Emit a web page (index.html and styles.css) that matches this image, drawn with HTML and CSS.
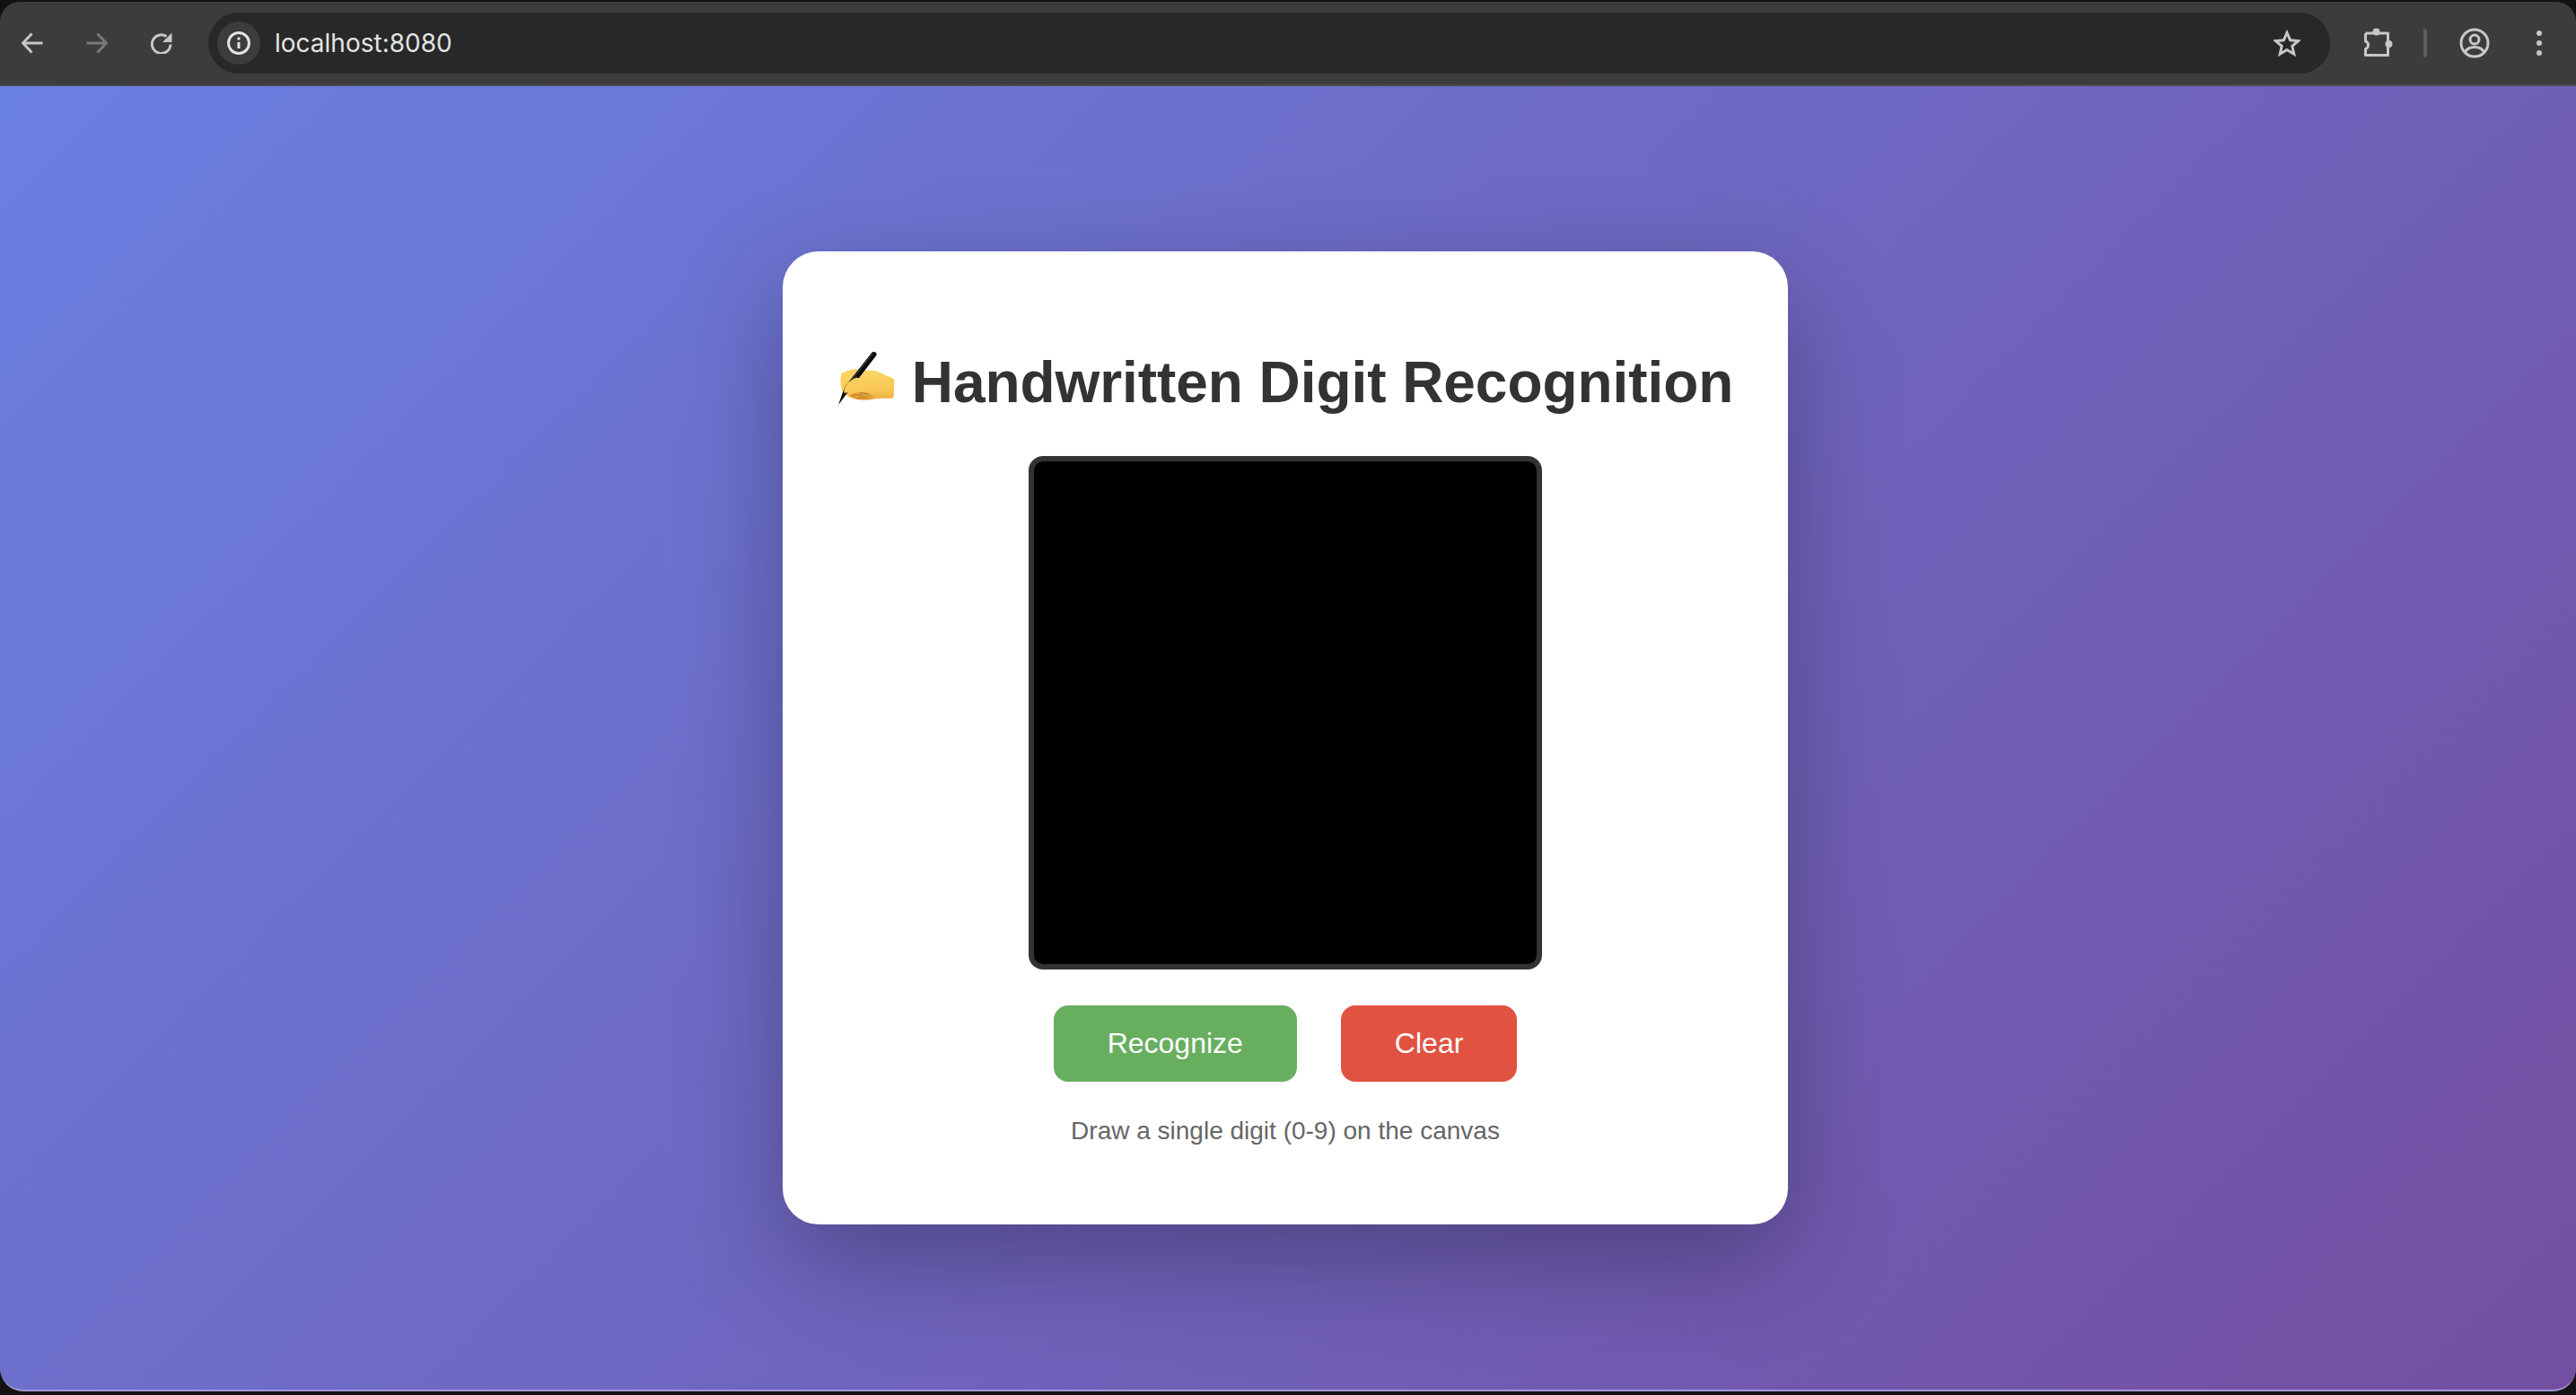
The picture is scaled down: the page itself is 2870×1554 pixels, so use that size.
FILE: index.html
```html
<!DOCTYPE html>
<html lang="en">
<head>
    <meta charset="UTF-8">
    <meta name="viewport" content="width=device-width, initial-scale=1.0">
    <title>Handwritten Digit Recognition</title>
    <link rel="stylesheet" href="styles.css">
</head>
<body>
    <div class="window">
        <div class="toolbar">
            <svg class="nav-icon" width="24" height="24" viewBox="0 0 24 24"><path d="M23.500 12H2M11.500 1.500L1.500 12l10 10.500"/></svg>
            <svg class="nav-icon nav-disabled" width="24" height="24" viewBox="0 0 24 24"><path d="M.5 12h21.500M12.500 1.500l10 10.500-10 10.500"/></svg>
            <svg class="nav-icon" width="24" height="24" viewBox="0 0 24 24"><path d="M22 13.500A10.300 10.300 0 1 1 17.500 4.600"/><path class="fill" d="M23.500 .5v10.500H13z"/></svg>

            <div class="address-bar">
                <span class="site-info">
                    <svg class="nav-icon" width="26" height="26" viewBox="0 0 26 26"><circle cx="13" cy="13" r="11.500"/><path d="M13 12v7"/><path class="fill thin" d="M11.500 6.500h3v3h-3z"/></svg>
                </span>
                <span class="url">localhost:8080</span>
                <svg class="nav-icon star" width="30" height="30" viewBox="0 0 30 30"><path d="M15 3.500l3.700 8.300 8.800.8-6.700 5.800 2 8.800L15 22.500l-7.800 4.700 2-8.800-6.700-5.800 8.800-.8z"/></svg>
            </div>

            <svg class="nav-icon puzzle" width="34" height="34" viewBox="0 0 34 34"><path d="M3.500 6h25v9.500M28.500 20.500v10h-25v-7a4.500 4.500 0 0 0 3-4 4.500 4.500 0 0 0-3-4.500V6" stroke-linejoin="round"/><circle class="fill" cx="15.500" cy="4.500" r="4"/><circle class="fill" cx="29.500" cy="18" r="4"/></svg>
            <span class="divider"></span>
            <svg class="nav-icon avatar" width="34" height="34" viewBox="0 0 34 34"><circle cx="17" cy="17" r="15"/><circle cx="17" cy="13" r="5"/><path d="M6.500 27c2-4 6-5.500 10.500-5.500s8.500 1.500 10.500 5.500"/></svg>
            <span class="menu-dots"><i></i><i></i><i></i></span>
        </div>

        <main class="page">
            <div class="card">
                <h1 class="heading">
                    <svg class="emoji" width="65" height="62" viewBox="25 25 195 186">
                        <defs>
                            <linearGradient id="hand" x1="0.400" y1="0" x2="0.500" y2="1">
                                <stop offset="0" stop-color="#fbd667"/>
                                <stop offset="0.700" stop-color="#f9c753"/>
                                <stop offset="1" stop-color="#eeb040"/>
                            </linearGradient>
                        </defs>
                        <path fill="url(#hand)" d="M38 100C60 88 85 82 110 88c20 4 40 0 55 8l40 18q10 2 10 11l-2 53q-1 6-9 5c-24 0-44-1-59 3-20 4-45 4-65-2-15-2-30-12-38-26-8-18-8-40-4-58z"/>
                        <path fill="#e0a03c" d="M66 172c14-8 38-12 66-4 6 2 12 6 18 11-6 2-12 4-18 7-18 3-38 2-50-2-6-3-12-7-16-12z"/>
                        <path fill="none" stroke="#b8742a" stroke-width="3" d="M72 176c12-6 24-6 36-2M90 184c10-5 22-5 32-2M100 164c10 0 22 2 32 6"/>
                        <path fill="#0b0b0b" d="M140 30q8-6 15 2 3 6-3 12L70 150l-12 15-30 40 14-40 10-23z"/>
                        <path fill="none" stroke="#6c6c6c" stroke-width="2" d="M143 33L56 143"/>
                        <path fill="#f9cd5c" d="M47 160c2-20 18-36 38-45 15-5 23 10 15 20-10 15-30 30-53 30z"/>
                    </svg>
                    <span class="heading-text">Handwritten Digit Recognition</span>
                </h1>
                <canvas class="digit-canvas" width="280" height="280"></canvas>
                <div class="actions">
                    <button class="btn btn-recognize">Recognize</button>
                    <button class="btn btn-clear">Clear</button>
                </div>
                <p class="hint">Draw a single digit (0-9) on the canvas</p>
            </div>
        </main>
    </div>
</body>
</html>
```

FILE: styles.css
```css
*{
    box-sizing: border-box;
}
html, body{
    height: 100%;
}
body{
    margin: 0;
    background-color: #141210;
    font-family: "Liberation Sans", Arial, sans-serif;
    overflow: hidden;
}

.window{
    height: 100%;
    display: flex;
    flex-direction: column;
    padding-bottom: 4px;
    background-color: #141210;
}

/* browser bar */
.toolbar{
    height: 94px;
    flex-shrink: 0;
    display: flex;
    align-items: center;
    margin-top: 2px;
    padding-left: 24px;
    background-color: #3c3c3c;
    border-top-left-radius: 22px;
    border-top-right-radius: 22px;
    border-bottom: 2px solid #4a4a4a;
}
.nav-icon{
    flex-shrink: 0;
    fill: none;
    stroke: #c7c7c7;
    stroke-width: 3;
    margin-right: 48px;
}
.nav-icon .fill{
    fill: #c7c7c7;
    stroke: none;
}
.nav-disabled{
    stroke: #7a7a7a;
}
.address-bar{
    width: 2364px;
    height: 68px;
    flex-shrink: 0;
    display: flex;
    align-items: center;
    margin-left: -8px;
    padding-left: 10px;
    border-radius: 34px;
    background-color: #282828;
}
.site-info{
    width: 48px;
    height: 48px;
    display: flex;
    align-items: center;
    justify-content: center;
    border-radius: 50%;
    background-color: #3c3c3c;
}
.site-info .nav-icon{
    margin: 0;
    stroke: #e3e3e3;
}
.site-info .nav-icon .fill{
    fill: #e3e3e3;
}
.url{
    flex: 1;
    margin-left: 16px;
    font-family: Inter, sans-serif;
    font-size: 28px;
    color: #e3e3e3;
}
.star{
    margin-right: 33px;
}
.puzzle{
    margin: 0 0 0 36px;
}
.divider{
    width: 4px;
    height: 32px;
    margin: 0 36px 0 34px;
    background-color: #5f5f5f;
    border-radius: 2px;
}
.avatar{
    margin-right: 0;
}
.menu-dots{
    display: flex;
    flex-direction: column;
    gap: 5px;
    margin-left: 52px;
}
.menu-dots i{
    width: 6px;
    height: 6px;
    border-radius: 50%;
    background-color: #c7c7c7;
}

/* page */
.page{
    flex: 1;
    display: flex;
    align-items: center;
    justify-content: center;
    padding-right: 6px;
    background: linear-gradient(135deg, #6a80e2 0%, #734ea0 100%);
    border-bottom-left-radius: 26px;
    border-bottom-right-radius: 26px;
    border-bottom: 2px solid #a497d8;
}
.card{
    width: 1120px;
    padding: 108px 0 88px;
    display: flex;
    flex-direction: column;
    align-items: center;
    background-color: white;
    border-radius: 40px;
    box-shadow: 0 40px 120px rgba(0, 0, 0, 0.3);
}
.heading{
    height: 74px;
    margin: 1px 0 45px;
    display: flex;
    align-items: center;
    gap: 18px;
    font-size: 64px;
    font-weight: bold;
    color: #333333;
    white-space: nowrap;
}
.heading-text{
    letter-spacing: -0.06px;
}
.emoji{
    margin-bottom: 9px;
}
.digit-canvas{
    display: block;
    width: 572px;
    height: 572px;
    background-color: black;
    border: 6px solid #333333;
    border-radius: 16px;
}
.actions{
    display: flex;
    gap: 49px;
    margin-top: 40px;
}
.btn{
    height: 85px;
    padding: 0 60px;
    border: none;
    border-radius: 16px;
    font-family: "Liberation Sans", Arial, sans-serif;
    font-size: 32px;
    color: white;
    cursor: pointer;
}
.btn-recognize{
    background-color: #68ae5f;
}
.btn-clear{
    background-color: #e15241;
}
.hint{
    margin: 39px 0 0;
    font-size: 28px;
    line-height: 32px;
    color: #666666;
}
```
